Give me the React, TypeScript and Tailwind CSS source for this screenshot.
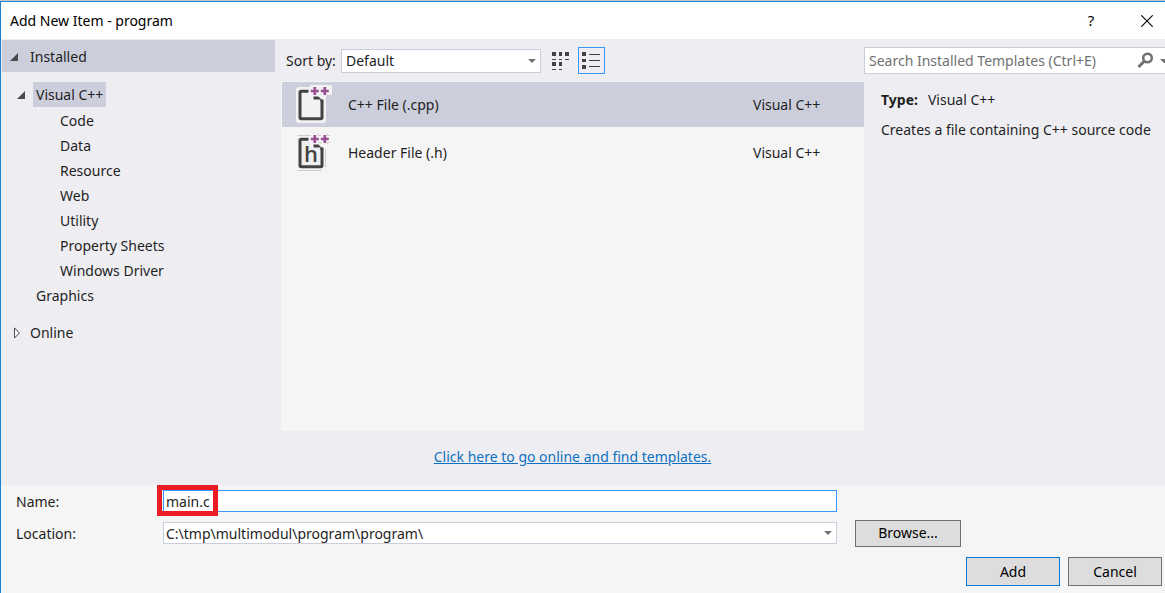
import React from "react";

const categories = [
  "Code",
  "Data",
  "Resource",
  "Web",
  "Utility",
  "Property Sheets",
  "Windows Driver",
];

const templates = [
  { name: "C++ File (.cpp)", language: "Visual C++", letter: "", selected: true },
  { name: "Header File (.h)", language: "Visual C++", letter: "h", selected: false },
];

function ExpandedArrow() {
  return (
    <svg viewBox="0 0 8 8" className="h-2 w-2 shrink-0" aria-hidden="true">
      <path d="M8 0V8H0Z" fill="#4b4b4d" />
    </svg>
  );
}

function CollapsedArrow() {
  return (
    <svg viewBox="0 0 8 12" className="h-3 w-2 shrink-0" aria-hidden="true">
      <path d="M2.5 0.9V11.1L7.3 6Z" fill="#fafafa" stroke="#4b4b4d" strokeWidth="1" />
    </svg>
  );
}

function DropArrow() {
  return (
    <svg
      viewBox="0 0 8 4"
      className="pointer-events-none absolute top-1/2 right-[5px] h-1 w-2 -translate-y-1/2"
      aria-hidden="true"
    >
      <path d="M0 0H8L4 4Z" fill="#717171" />
    </svg>
  );
}

function FileIcon({ letter }: { letter: string }) {
  return (
    <svg viewBox="0 0 36 40" className="h-10 w-9 shrink-0" aria-hidden="true">
      {letter ? (
        <>
          <path
            d="M1.5 2.5H15M1.5 37.5H26M29.5 16V34M22 0.5V2.5H25M31 0.5V2.5H34M22 9.5H25V11M31 11V9.5H34"
            fill="none"
            stroke="#c4c4c6"
            strokeWidth="0.8"
          />
          <path d="M4 5H14V15H26V34H4Z" fill="#f0efef" />
        </>
      ) : (
        <path
          d="M3 2H14V0H36V10H30V35Q30 38 27 38H3Q0 38 0 35V5Q0 2 3 2Z"
          fill="#f3f2f3"
        />
      )}
      <path
        d="M12.5 6.2H5.2Q4 6.2 4 7.4V32.5Q4 33.7 5.2 33.7H24.8Q26 33.7 26 32.5V14.5"
        fill="none"
        stroke="#424242"
        strokeWidth="3"
      />
      <path d="M17.5 11.5H22.5L27.5 16.5V17H24.5V14.5H17.5Z" fill="#424242" />
      <path
        d="M18.8 2V10M14.8 6H22.8M28.8 2V10M24.8 6H32.8"
        stroke="#9b4f96"
        strokeWidth="2.7"
      />
      {letter && (
        <text
          x="15"
          y="29"
          textAnchor="middle"
          fill="#424242"
          className="font-['Open_Sans',sans-serif] text-[22px] font-semibold"
        >
          {letter}
        </text>
      )}
    </svg>
  );
}

export default function App() {
  return (
    <div className="flex min-h-screen flex-col overflow-hidden border-t border-[#c8c8c8] bg-[#f5f5f5] font-['Noto_Sans',sans-serif] text-sm text-[#1e1e1e]">
      <div className="flex flex-1 flex-col border-t border-l border-[#1883d7]">
        <header className="flex h-[37px] items-center bg-white pr-3 pl-[9px] text-black">
          <h1 className="flex-1">Add New Item - program</h1>
          <button type="button" aria-label="Help" className="mr-[42px] w-4 text-center text-[15px]">
            ?
          </button>
          <button type="button" aria-label="Close">
            <svg viewBox="0 0 12 12" className="h-3 w-3" aria-hidden="true">
              <path d="M0.3 0.3L11.7 11.7M11.7 0.3L0.3 11.7" stroke="#000" strokeWidth="1.1" />
            </svg>
          </button>
        </header>

        <main className="flex h-[446px] bg-[#eeeef2] pt-px">
          <nav aria-label="Template categories" className="w-[274px] shrink-0 pl-px">
            <button type="button" className="flex h-8 w-full items-center gap-3 bg-[#cccedb] pt-px pl-2">
              <ExpandedArrow />
              Installed
            </button>
            <div className="mt-[10px] flex h-[25px] items-center gap-2 pl-[15px]">
              <ExpandedArrow />
              <button type="button" className="h-full bg-[#cccedb] px-[3px] pt-px">
                Visual C++
              </button>
            </div>
            <ul className="pt-px">
              {categories.map((name) => (
                <li key={name} className="flex h-[25px] items-center pl-[58px]">
                  <button type="button">{name}</button>
                </li>
              ))}
            </ul>
            <div className="flex h-[25px] items-center pl-[34px]">
              <button type="button">Graphics</button>
            </div>
            <button type="button" className="mt-3 flex h-[25px] items-center gap-[10px] pl-[10px]">
              <CollapsedArrow />
              Online
            </button>
          </nav>

          <section className="ml-[6px] flex min-w-0 flex-1 flex-col">
            <div className="flex h-[41px] items-center pl-[5px]">
              <label htmlFor="sort" className="w-[55px] whitespace-nowrap">
                Sort by:
              </label>
              <div className="relative w-[200px]">
                <select
                  id="sort"
                  className="block h-6 w-full appearance-none border border-[#cccedb] bg-white pt-px pl-1 outline-none"
                >
                  <option>Default</option>
                </select>
                <DropArrow />
              </div>
              <button
                type="button"
                aria-label="Small icons"
                className="ml-1 flex h-[27px] w-8 items-center justify-center"
              >
                <svg viewBox="0 0 18 20" className="h-5 w-[18px]" aria-hidden="true">
                  <path
                    d="M0 1h4v4h-4zM7 1h3v4h-3zM13 1h4v4h-4zM0 11h4v4h-4zM7 11h3v4h-3zM0 8h4v1h-4zM7 8h3v1h-3zM13 8h4v1h-4zM0 18h4v1h-4zM7 18h3v1h-3z"
                    fill="#424242"
                  />
                </svg>
              </button>
              <button
                type="button"
                aria-label="List"
                className="ml-px flex h-[27px] w-[27px] items-center justify-center border border-[#3399ff]"
              >
                <svg viewBox="0 0 19 19" className="h-[19px] w-[19px]" aria-hidden="true">
                  <path
                    d="M0 1h4v4h-4zM0 8h4v3h-4zM0 14h4v4h-4zM7 3h11v1h-11zM7 9h11v1h-11zM7 15h11v1h-11z"
                    fill="#424242"
                  />
                </svg>
              </button>
            </div>
            <ul
              aria-label="Templates"
              className="flex flex-1 flex-col gap-[3px] border border-r-0 border-[#f5f5f5] bg-[#f5f5f5]"
            >
              {templates.map((item) => (
                <li key={item.name} className={item.selected ? "bg-[#cccedb]" : ""}>
                  <button type="button" className="flex h-[45px] w-full items-center pl-[14px] text-left">
                    <FileIcon letter={item.letter} />
                    <span className="ml-4 flex-1">{item.name}</span>
                    <span className="w-[111px]">{item.language}</span>
                  </button>
                </li>
              ))}
            </ul>
            <p className="flex h-[54px] items-center justify-center pb-[2px]">
              <a href="#online" className="text-[#0e70c0] underline">
                Click here to go online and find templates.
              </a>
            </p>
          </section>

          <aside className="w-[301px] shrink-0 overflow-hidden pt-[7px]">
            <div className="flex h-[27px] items-center border border-r-0 border-[#cccedb] bg-white pl-1">
              <input
                type="text"
                aria-label="Search Installed Templates"
                placeholder="Search Installed Templates (Ctrl+E)"
                className="min-w-0 flex-1 bg-transparent pt-px outline-none placeholder:text-[#717171]"
              />
              <button type="button" aria-label="Search" className="mr-[6px]">
                <svg viewBox="0 0 17 17" className="h-[17px] w-[17px]" aria-hidden="true">
                  <circle cx="10.5" cy="6" r="4.3" fill="none" stroke="#717171" strokeWidth="2.5" />
                  <path d="M7.5 9L1.5 15" stroke="#717171" strokeWidth="3" />
                </svg>
              </button>
              <svg viewBox="0 0 5 4" className="h-1 w-[5px]" aria-hidden="true">
                <path d="M0 0H5V4H4Z" fill="#717171" />
              </svg>
            </div>
            <div className="pt-4 pl-[17px] whitespace-nowrap">
              <p className="leading-5">
                <strong className="mr-[10px] font-bold">Type:</strong>
                Visual C++
              </p>
              <p className="mt-[10px] leading-5">Creates a file containing C++ source code</p>
            </div>
          </aside>
        </main>

        <form className="flex flex-1 flex-col pt-[5px] pr-[3px] pl-[15px]">
          <div className="flex h-[22px] items-center pr-[325px]">
            <label htmlFor="name" className="w-[147px] shrink-0 pt-px">
              Name:
            </label>
            <div className="relative flex-1">
              <input
                id="name"
                type="text"
                defaultValue="main.c"
                className="block h-[22px] w-full border border-[#3399ff] bg-white px-[2px] outline-none"
              />
              <div className="pointer-events-none absolute -top-[5px] -left-[6px] h-[31px] w-[61px] border-5 border-[#ed1c24]" />
            </div>
          </div>
          <div className="mt-[7px] flex h-[28px] items-center">
            <label htmlFor="location" className="w-[147px] shrink-0 pt-px">
              Location:
            </label>
            <div className="relative flex-1">
              <select
                id="location"
                className="block h-[22px] w-full appearance-none border border-[#cccedb] bg-white px-[2px] pt-px outline-none"
              >
                <option>C:\tmp\multimodul\program\program\</option>
              </select>
              <DropArrow />
            </div>
            <button
              type="button"
              className="mr-[201px] ml-[18px] h-[27px] w-[106px] border border-[#707070] bg-[#dddddd] text-black"
            >
              Browse...
            </button>
          </div>
          <div className="mt-[10px] flex justify-end gap-2 text-black">
            <button type="submit" className="h-[29px] w-[94px] border border-[#0078d7] bg-[#dddddd] pt-px">
              Add
            </button>
            <button type="button" className="h-[29px] w-[94px] border border-[#707070] bg-[#dddddd] pt-px">
              Cancel
            </button>
          </div>
        </form>
      </div>
    </div>
  );
}
